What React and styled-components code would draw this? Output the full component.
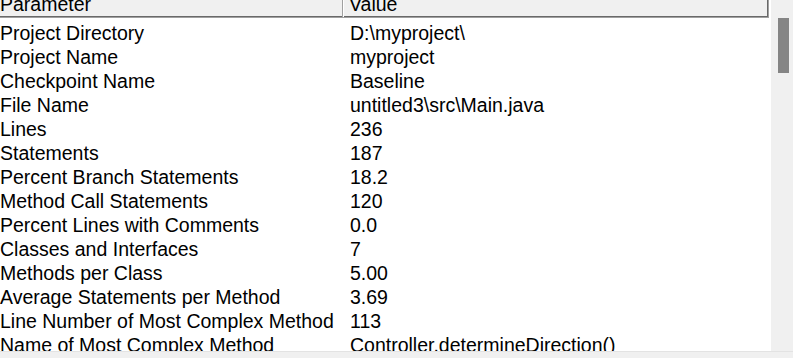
import React from "react";
import styled, { createGlobalStyle } from "styled-components";

const Global = createGlobalStyle`
  html, body { margin: 0; padding: 0; background: #ffffff; overflow: hidden; }
  body { font-family: "Liberation Sans", Arial, sans-serif; }
`;

const Frame = styled.div`
  width: 793px;
  height: 358px;
  display: grid;
  grid-template-columns: 771px 22px;
  grid-template-rows: 351px 7px;
  overflow: hidden;
  background: #ffffff;
`;

const Viewport = styled.div`
  overflow: hidden;
  position: relative;
  background: #ffffff;
`;

const Table = styled.div`
  width: 769px;
  margin-top: -4px;
`;

const HeaderRow = styled.div`
  display: grid;
  grid-template-columns: 342px 1fr;
  height: 22px;
  background: #f0f0f0;
  border-bottom: 1px solid #a0a0a0;
  border-right: 1px solid #a0a0a0;
  box-shadow: inset -1px -1px 0 #696969;
  box-sizing: border-box;
`;

const HeaderCell = styled.div`
  font-size: 19.5px;
  line-height: 22px;
  color: #000000;
  white-space: nowrap;
  overflow: hidden;
  padding-left: ${(p) => (p.$first ? "0" : "6px")};
  border-left: ${(p) => (p.$first ? "none" : "1px solid #a0a0a0")};
  box-shadow: ${(p) => (p.$first ? "none" : "inset 1px 0 0 #ffffff")};
  margin-top: -3px;
`;

const Body = styled.div`
  padding-top: 3px;
`;

const Row = styled.div`
  display: grid;
  grid-template-columns: 342px 1fr;
  height: 24px;
`;

const Cell = styled.div`
  font-size: 19.5px;
  line-height: 24px;
  color: #000000;
  white-space: nowrap;
  overflow: hidden;
  padding-left: ${(p) => (p.$first ? "0" : "8px")};
`;

const VScroll = styled.div`
  background: #f0f0f0;
  padding: 18px 4px 0 7px;
`;

const Thumb = styled.div`
  width: 11px;
  height: 55px;
  background: #858585;
`;

const HScroll = styled.div`
  grid-column: 1 / span 2;
  background: #f0f0f0;
  border-top: 1px solid #e3e3e3;
`;

const rows = [
  ["Project Directory", "D:\\myproject\\"],
  ["Project Name", "myproject"],
  ["Checkpoint Name", "Baseline"],
  ["File Name", "untitled3\\src\\Main.java"],
  ["Lines", "236"],
  ["Statements", "187"],
  ["Percent Branch Statements", "18.2"],
  ["Method Call Statements", "120"],
  ["Percent Lines with Comments", "0.0"],
  ["Classes and Interfaces", "7"],
  ["Methods per Class", "5.00"],
  ["Average Statements per Method", "3.69"],
  ["Line Number of Most Complex Method", "113"],
  ["Name of Most Complex Method", "Controller.determineDirection()"],
];

export default function App() {
  return (
    <>
      <Global />
      <Frame>
        <Viewport>
          <Table>
            <HeaderRow>
              <HeaderCell $first>Parameter</HeaderCell>
              <HeaderCell>Value</HeaderCell>
            </HeaderRow>
            <Body>
              {rows.map(([k, v]) => (
                <Row key={k}>
                  <Cell $first>{k}</Cell>
                  <Cell>{v}</Cell>
                </Row>
              ))}
            </Body>
          </Table>
        </Viewport>
        <VScroll>
          <Thumb />
        </VScroll>
        <HScroll />
      </Frame>
    </>
  );
}
